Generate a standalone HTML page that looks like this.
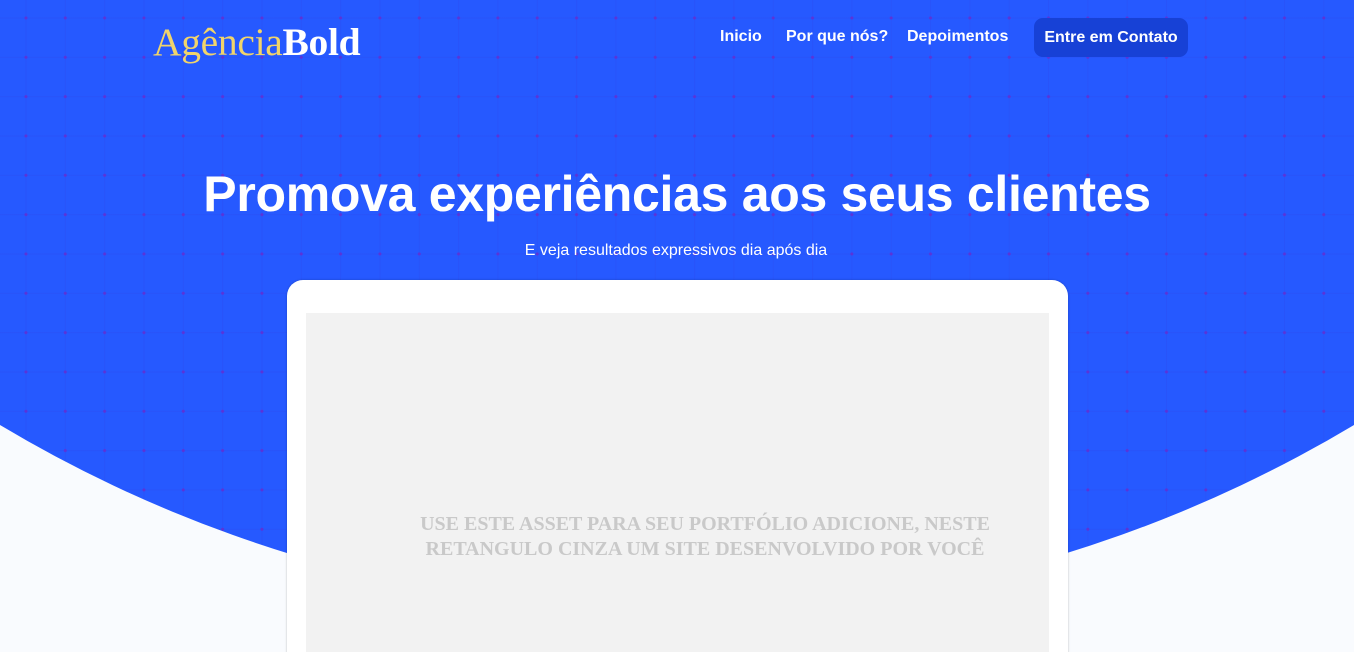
<!DOCTYPE html>
<html><head><meta charset="utf-8"><style>
*{margin:0;padding:0;box-sizing:border-box}
html,body{width:1354px;height:652px;overflow:hidden}
body{background:#f9fbfe;font-family:"Liberation Sans",sans-serif;position:relative}
.blue{position:absolute;left:-642px;top:-2026px;width:2638px;height:2638px;border-radius:50%;background:#2659ff;overflow:hidden}
.grid{position:absolute;left:642px;top:2026px;width:1354px;height:652px;
background-image:radial-gradient(circle,#5b33d8 1.3px,transparent 1.8px),linear-gradient(to right,rgba(60,40,200,.1) 1px,transparent 1px),linear-gradient(to bottom,rgba(60,40,200,.1) 1px,transparent 1px);
background-size:39.33px 39.33px;background-position:6.3px -1.7px,25.5px 0,0 17.5px}
.logo{position:absolute;left:153px;top:19px;font-family:"Liberation Serif",serif;font-size:39.5px;color:#f1d46b;letter-spacing:-0.3px}
.logo b{color:#fff}
.nav{position:absolute;top:28px;font-weight:bold;font-size:16px;color:#fff}
.btn{position:absolute;left:1034px;top:18px;width:154px;height:39px;background:#1741d6;border-radius:9px;color:#fff;font-weight:bold;font-size:16px;text-align:center;line-height:39px}
h1{position:absolute;left:0;width:1354px;top:165px;text-align:center;color:#fff;font-size:50px;font-weight:bold;letter-spacing:-0.3px}
.sub{position:absolute;left:0;width:1352px;top:242px;text-align:center;color:#fff;font-size:16px}
.card{position:absolute;left:287px;top:280px;width:781px;height:400px;background:#fff;border-radius:16px;box-shadow:0 0 2px rgba(0,0,0,.25)}
.inner{position:absolute;left:19px;top:33px;width:743px;height:360px;background:#f2f2f2}
.t{position:absolute;width:800px;top:232px;left:18px;text-align:center;font-family:"Liberation Serif",serif;font-weight:bold;font-size:20px;color:#c9c9c9;line-height:25px}
</style></head><body>
<div class="blue"><div class="grid"></div></div>
<div class="logo">Agência<b>Bold</b></div>
<div class="nav" style="left:720px">Inicio</div>
<div class="nav" style="left:786px">Por que nós?</div>
<div class="nav" style="left:907px">Depoimentos</div>
<div class="btn">Entre em Contato</div>
<h1>Promova experiências aos seus clientes</h1>
<div class="sub">E veja resultados expressivos dia após dia</div>
<div class="card"><div class="inner"></div><div class="t">USE ESTE ASSET PARA SEU PORTFÓLIO ADICIONE, NESTE<br>RETANGULO CINZA UM SITE DESENVOLVIDO POR VOCÊ</div></div>
</body></html>
